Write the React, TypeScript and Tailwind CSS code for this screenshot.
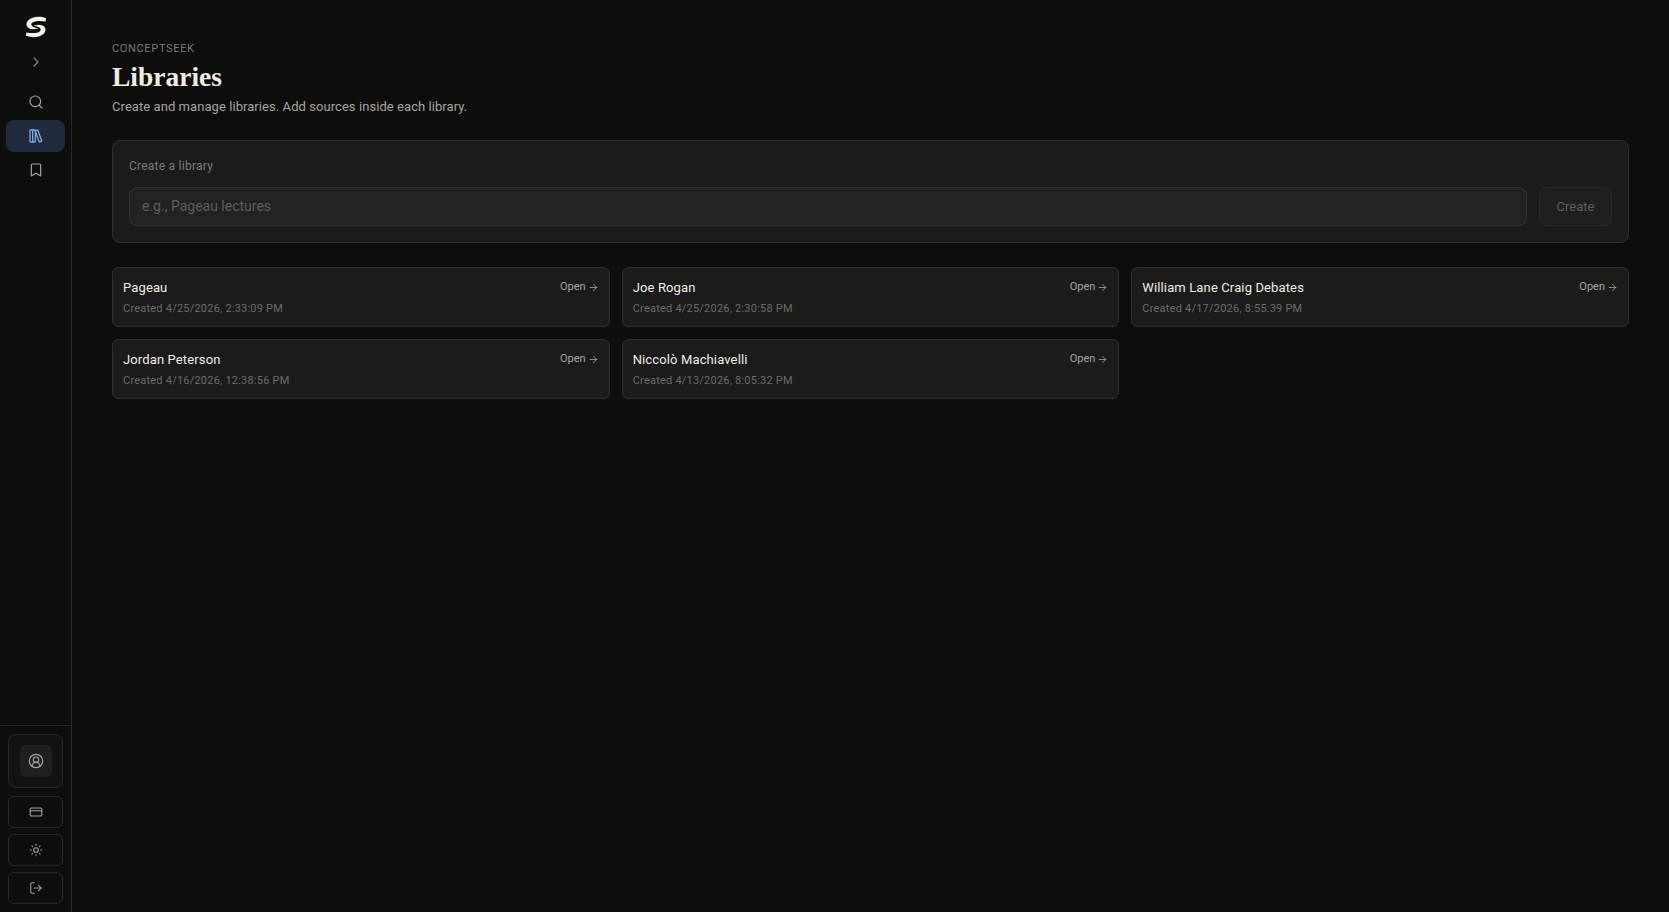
import React from "react";
import { ArrowRight, Bookmark, ChevronRight, CircleUserRound, CreditCard, LibraryBig, LogOut, Search, Sun } from "lucide-react";

const LIBRARIES = [
  { name: "Pageau", created: "Created 4/25/2026, 2:33:09 PM" },
  { name: "Joe Rogan", created: "Created 4/25/2026, 2:30:58 PM" },
  { name: "William Lane Craig Debates", created: "Created 4/17/2026, 8:55:39 PM" },
  { name: "Jordan Peterson", created: "Created 4/16/2026, 12:38:56 PM" },
  { name: "Niccolò Machiavelli", created: "Created 4/13/2026, 8:05:32 PM" },
];

function Logo() {
  return (
    <svg width="24" height="24" viewBox="0 0 24 24" fill="#f4f1ea">
      <path d="M22 3.2C16 .8 8 1.2 3.8 5.8C.5 10 3.5 14.2 9 14.2L14.5 13.5C10.5 12.3 6.8 11.8 7.4 8.8C8.4 6 15 5.2 21.6 6.6Z" />
      <path d="M2 20.8C8 23.2 16 22.8 20.2 18.2C23.5 14 20.5 9.8 15 9.8L9.5 10.5C13.5 11.7 17.2 12.2 16.6 15.2C15.6 18 9 18.8 2.4 17.4Z" />
    </svg>
  );
}

function Sidebar() {
  return (
    <aside className="w-[72px] h-[912px] shrink-0 flex flex-col border-r border-[#2a2927]">
      <div className="flex-1 flex flex-col items-center">
        <div className="mt-[15px] h-6 flex items-center justify-center"><Logo /></div>
        <ChevronRight className="mt-[15px] w-4 h-4 text-[#8a8780]" strokeWidth={1.75} />
        <Search className="mt-6 w-4 h-4 text-[#a8a59d]" strokeWidth={1.75} />
        <div className="mt-[10px] w-[59px] h-8 rounded-lg bg-[#1f2a3c] flex items-center justify-center">
          <LibraryBig className="w-4 h-4 text-[#7ea6e0]" strokeWidth={2} />
        </div>
        <Bookmark className="mt-[10px] w-4 h-4 text-[#a8a59d]" strokeWidth={1.75} />
      </div>
      <div className="border-t border-[#2a2927] px-2 pt-2 pb-[8px] flex flex-col gap-1.5">
        <div className="h-[54px] mb-[2px] rounded-lg border border-[#2a2927] bg-[#121211] flex items-center justify-center">
          <div className="w-8 h-8 rounded-md bg-[#1f1f1e] flex items-center justify-center">
            <CircleUserRound className="w-4 h-4 text-[#a8a59d]" strokeWidth={1.75} />
          </div>
        </div>
        <div className="h-8 rounded-md border border-[#2a2927] flex items-center justify-center">
          <CreditCard className="w-[14px] h-[14px] text-[#a8a59d]" strokeWidth={1.75} />
        </div>
        <div className="h-8 rounded-md border border-[#2a2927] flex items-center justify-center">
          <Sun className="w-[14px] h-[14px] text-[#a8a59d]" strokeWidth={1.75} />
        </div>
        <div className="h-8 rounded-md border border-[#2a2927] flex items-center justify-center">
          <LogOut className="w-[14px] h-[14px] text-[#a8a59d]" strokeWidth={1.75} />
        </div>
      </div>
    </aside>
  );
}

export default function App() {
  return (
    <div className="flex h-[912px] overflow-hidden bg-[#0d0d0c] font-['Roboto','Noto_Sans',sans-serif] text-[#f4f1ea]">
      <Sidebar />
      <main className="flex-1 min-w-0 pl-10 pr-10 pt-10">
        <div className="mt-[1px] text-[11px] leading-4 tracking-[0.06em] text-[#7d7a72]">CONCEPTSEEK</div>
        <h1 className="mt-[4px] font-['Liberation_Serif',serif] font-bold text-[27.5px] leading-8 text-[#f0ece2]">Libraries</h1>
        <p className="mt-[4px] text-[13px] tracking-[0.005em] leading-5 text-[#a8a59d]">Create and manage libraries. Add sources inside each library.</p>

        <section className="mt-[23px] h-[103px] rounded-lg border border-[#2f2e2c] bg-[#1b1b1c] p-4">
          <label className="block mt-[1px] text-xs tracking-[0.02em] leading-4 text-[#7d7a72]">Create a library</label>
          <div className="mt-[13px] flex gap-3">
            <input
              placeholder="e.g., Pageau lectures"
              className="flex-1 h-[39px] rounded-lg border border-[#343331] bg-[#222222] px-3 pb-[1px] text-sm text-[#f4f1ea] placeholder:text-[#5f5d58] outline-none"
            />
            <button className="w-[73px] h-[39px] rounded-lg border border-[#2a2927] bg-[#1f1f1f] text-[13px] text-[#5f5d58]">Create</button>
          </div>
        </section>

        <div className="mt-6 grid grid-cols-3 gap-3">
          {LIBRARIES.map((lib) => (
            <div key={lib.name} className="h-[60px] rounded-md border border-[#2f2e2c] bg-[#1b1b1c] px-[10px] pt-[10px] flex justify-between">
              <div>
                <div className="text-[13px] tracking-[0.01em] leading-5 font-[450] text-[#f0ece2]">{lib.name}</div>
                <div className="mt-[3px] text-[11px] tracking-[0.02em] leading-4 text-[#6e6b64]">{lib.created}</div>
              </div>
              <div className="flex items-center gap-0.5 h-4 mt-[1px] text-[11px] text-[#a8a59d]">
                Open <ArrowRight className="w-[11px] h-[11px]" strokeWidth={1.75} />
              </div>
            </div>
          ))}
        </div>
      </main>
    </div>
  );
}
